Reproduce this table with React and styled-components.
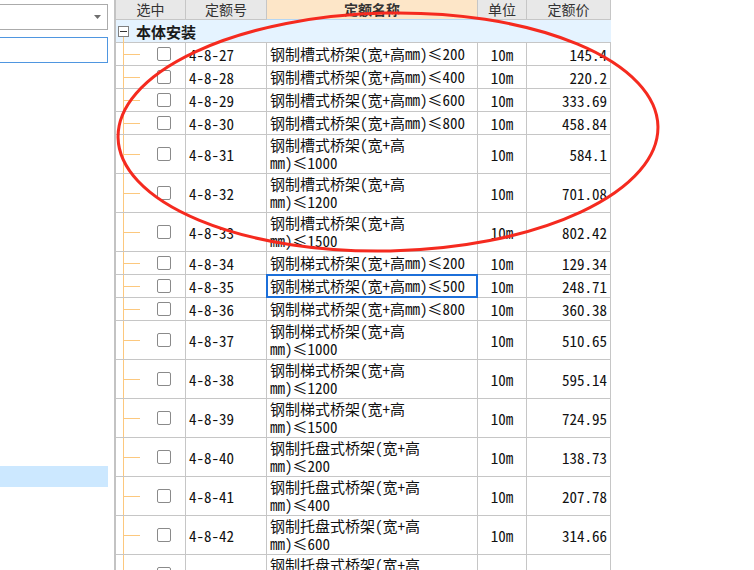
import React from 'react';
import styled, { createGlobalStyle } from 'styled-components';

const GRID_COLS = '70px 81px 211px 49px 84px';
const LINE = '#c6c6c6';
const TREE = '#fcc87e';

const GlobalStyle = createGlobalStyle`
  html, body {
    margin: 0;
    padding: 0;
    background: #fff;
    overflow: hidden;
  }
  body {
    font-family: "Noto Sans Mono CJK SC", "Noto Sans CJK SC", monospace;
    color: #111;
  }
`;

const quotas = [
  { code: '4-8-27', name: ['钢制槽式桥架(宽+高mm)≤200'], price: '145.4' },
  { code: '4-8-28', name: ['钢制槽式桥架(宽+高mm)≤400'], price: '220.2' },
  { code: '4-8-29', name: ['钢制槽式桥架(宽+高mm)≤600'], price: '333.69' },
  { code: '4-8-30', name: ['钢制槽式桥架(宽+高mm)≤800'], price: '458.84' },
  { code: '4-8-31', name: ['钢制槽式桥架(宽+高', 'mm)≤1000'], price: '584.1' },
  { code: '4-8-32', name: ['钢制槽式桥架(宽+高', 'mm)≤1200'], price: '701.08' },
  { code: '4-8-33', name: ['钢制槽式桥架(宽+高', 'mm)≤1500'], price: '802.42' },
  { code: '4-8-34', name: ['钢制梯式桥架(宽+高mm)≤200'], price: '129.34' },
  { code: '4-8-35', name: ['钢制梯式桥架(宽+高mm)≤500'], price: '248.71', focused: true },
  { code: '4-8-36', name: ['钢制梯式桥架(宽+高mm)≤800'], price: '360.38' },
  { code: '4-8-37', name: ['钢制梯式桥架(宽+高', 'mm)≤1000'], price: '510.65' },
  { code: '4-8-38', name: ['钢制梯式桥架(宽+高', 'mm)≤1200'], price: '595.14' },
  { code: '4-8-39', name: ['钢制梯式桥架(宽+高', 'mm)≤1500'], price: '724.95' },
  { code: '4-8-40', name: ['钢制托盘式桥架(宽+高', 'mm)≤200'], price: '138.73' },
  { code: '4-8-41', name: ['钢制托盘式桥架(宽+高', 'mm)≤400'], price: '207.78' },
  { code: '4-8-42', name: ['钢制托盘式桥架(宽+高', 'mm)≤600'], price: '314.66' },
  { code: '4-8-43', name: ['钢制托盘式桥架(宽+高', 'mm)≤800'], price: '422.51' },
];

const App = () => (
  <Page>
    <GlobalStyle />
    <SidePanel>
      <Dropdown>
        <svg width="7" height="4" viewBox="0 0 7 4">
          <path d="M0 0h7L3.5 4z" fill="#6e6e6e" />
        </svg>
      </Dropdown>
      <SearchBox />
      <SideItem $selected $offset={403} />
    </SidePanel>

    <Grid>
      <HeaderRow>
        <HeaderCell>选中</HeaderCell>
        <HeaderCell>定额号</HeaderCell>
        <HeaderCell $active>定额名称</HeaderCell>
        <HeaderCell>单位</HeaderCell>
        <HeaderCell>定额价</HeaderCell>
      </HeaderRow>

      <GroupRow>
        <Toggle>
          <svg width="7" height="1" viewBox="0 0 7 1">
            <rect width="7" height="1" fill="#333" />
          </svg>
        </Toggle>
        <GroupLabel>本体安装</GroupLabel>
      </GroupRow>

      {quotas.map((q) => (
        <Row key={q.code} $tall={q.name.length > 1}>
          <TreeCell>
            <Check />
          </TreeCell>
          <Cell>{q.code}</Cell>
          <NameCell $focused={q.focused}>
            {q.name.map((line) => (
              <span key={line}>{line}</span>
            ))}
          </NameCell>
          <Cell $align="center">10m</Cell>
          <Cell $align="flex-end">{q.price}</Cell>
        </Row>
      ))}
    </Grid>

    <Annotation width="754" height="570" viewBox="0 0 754 570">
      <ellipse
        cx="388"
        cy="132"
        rx="270"
        ry="119"
        transform="rotate(-1.2 388 132)"
        fill="none"
        stroke="#f52a1f"
        strokeWidth="3"
      />
    </Annotation>
  </Page>
);

export default App;

const Page = styled.div`
  position: relative;
  display: flex;
  align-items: flex-start;
  width: 754px;
  height: 570px;
  overflow: hidden;
`;

const SidePanel = styled.div`
  display: flex;
  flex-direction: column;
  width: 108px;
  padding-top: 4px;
  flex-shrink: 0;
`;

const Dropdown = styled.div`
  box-sizing: border-box;
  height: 26px;
  margin-left: -2px;
  border: 1px solid #ababab;
  display: flex;
  align-items: center;
  justify-content: flex-end;
  padding-right: 6px;
  background: #fff;
`;

const SearchBox = styled.div`
  box-sizing: border-box;
  height: 26px;
  margin-top: 7px;
  margin-left: -2px;
  border: 1px solid #4f96e0;
  background: #fff;
`;

const SideItem = styled.div`
  height: 21px;
  margin-top: ${(p) => p.$offset}px;
  background: ${(p) => (p.$selected ? '#cce8ff' : 'transparent')};
`;

const Grid = styled.div`
  margin-left: 6px;
  border-left: 2px solid #c3c3c3;
  display: flex;
  flex-direction: column;
  flex-shrink: 0;
`;

const HeaderRow = styled.div`
  display: grid;
  grid-template-columns: ${GRID_COLS};
  height: 20px;
`;

const HeaderCell = styled.div`
  box-sizing: border-box;
  display: flex;
  align-items: center;
  justify-content: center;
  border-right: 1px solid ${LINE};
  border-bottom: 1px solid ${(p) => (p.$active ? '#b5d6f3' : LINE)};
  background: ${(p) => (p.$active ? '#fde6c8' : '#e8e8e8')};
  font-family: "Noto Sans CJK SC", sans-serif;
  font-size: 14px;
  font-weight: ${(p) => (p.$active ? 700 : 400)};
  color: #333;
  line-height: 19px;
`;

const GroupRow = styled.div`
  box-sizing: border-box;
  height: 23px;
  display: flex;
  align-items: center;
  padding-left: 2px;
  gap: 7px;
  background: #e5f3ff;
  border-bottom: 1px solid ${LINE};
`;

const Toggle = styled.div`
  position: relative;
  box-sizing: border-box;
  width: 11px;
  height: 11px;
  margin-top: 1px;
  border: 1px solid #808080;
  background: #fff;
  display: flex;
  align-items: center;
  justify-content: center;

  &::after {
    content: '';
    position: absolute;
    left: 4px;
    top: 10px;
    width: 1px;
    height: 6px;
    background: ${TREE};
  }
`;

const GroupLabel = styled.span`
  font-family: "Noto Sans CJK SC", sans-serif;
  font-size: 15px;
  font-weight: 700;
  color: #1a1a1a;
`;

const Row = styled.div`
  display: grid;
  grid-template-columns: ${GRID_COLS};
  height: ${(p) => (p.$tall ? 39 : 23)}px;
`;

const Cell = styled.div`
  box-sizing: border-box;
  display: flex;
  align-items: center;
  justify-content: ${(p) => p.$align || 'flex-start'};
  padding: 0 3px;
  border-right: 1px solid ${LINE};
  border-bottom: 1px solid ${LINE};
  font-size: 15px;
  white-space: nowrap;
  overflow: hidden;
`;

const TreeCell = styled(Cell)`
  position: relative;
  padding-left: 41px;
  overflow: visible;

  &::before {
    content: '';
    position: absolute;
    left: 7px;
    top: 0;
    bottom: 0;
    width: 1px;
    background: ${TREE};
  }

  &::after {
    content: '';
    position: absolute;
    left: 8px;
    top: 50%;
    width: 16px;
    height: 1px;
    background: ${TREE};
  }
`;

const Check = styled.span`
  box-sizing: border-box;
  width: 14px;
  height: 14px;
  border: 1px solid #8a8a8a;
  border-radius: 2px;
  background: #fff;
`;

const NameCell = styled(Cell)`
  position: relative;
  flex-direction: column;
  align-items: flex-start;
  justify-content: center;
  line-height: 18px;
  overflow: visible;

  &::after {
    content: '';
    display: ${(p) => (p.$focused ? 'block' : 'none')};
    position: absolute;
    inset: -1px;
    border: 2px solid #1c6fd9;
  }
`;

const Annotation = styled.svg`
  position: absolute;
  left: 0;
  top: 0;
  pointer-events: none;
`;
